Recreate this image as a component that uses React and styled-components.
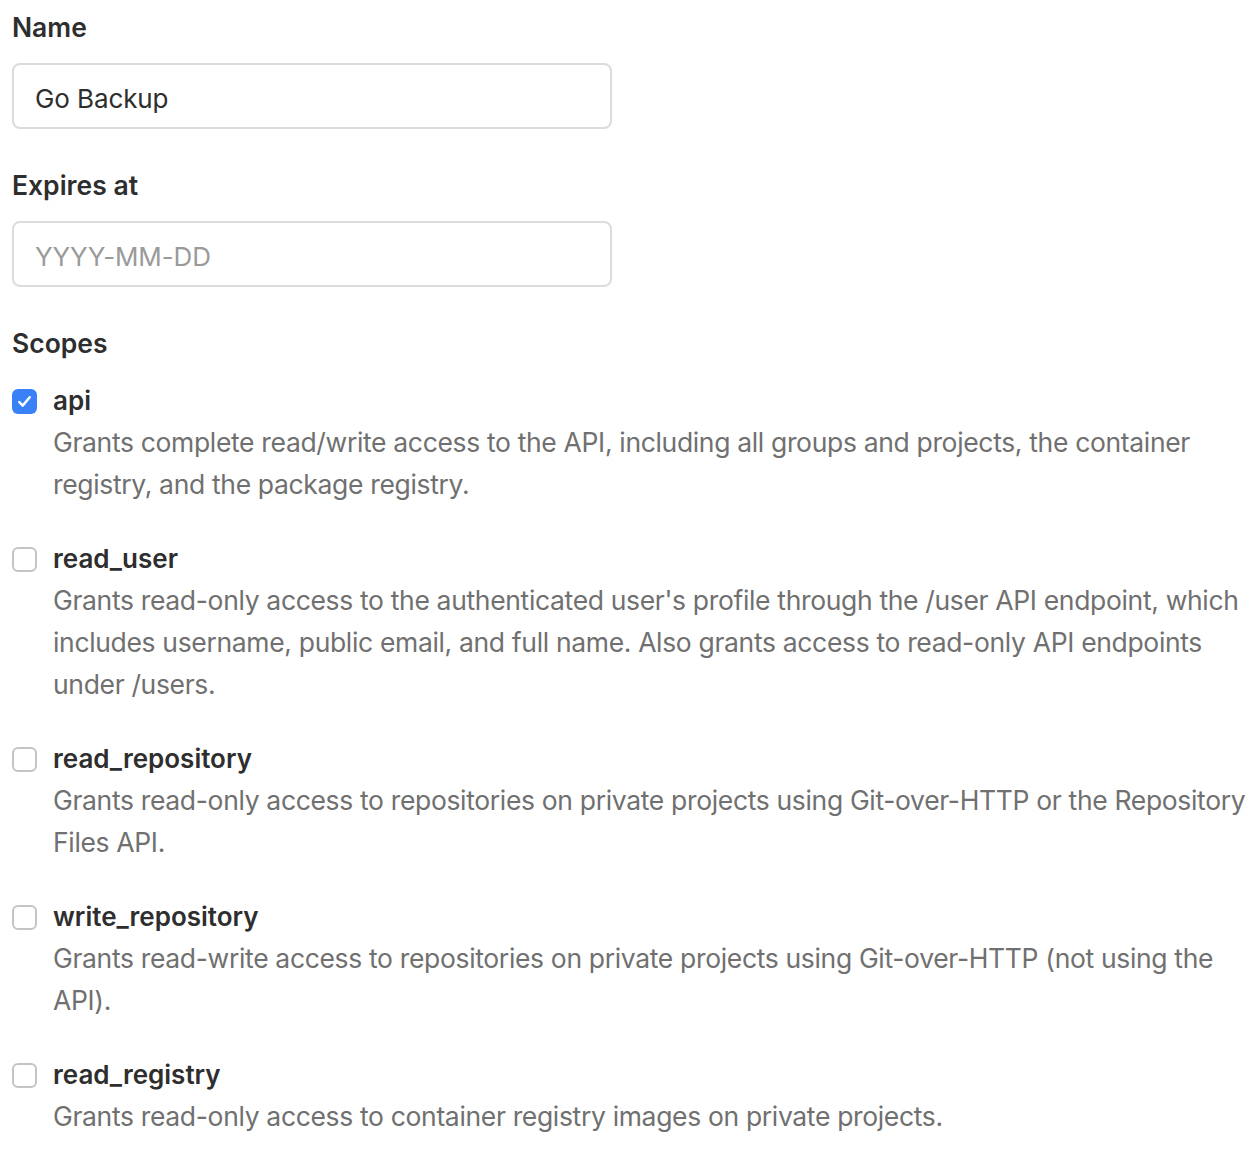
import React from "react";
import styled, { createGlobalStyle } from "styled-components";

const Global = createGlobalStyle`
  html, body { margin: 0; padding: 0; background: #fff; }
  body { font-family: Inter, "Noto Sans", "Liberation Sans", sans-serif; color: #2e2e2e; }
`;

const Page = styled.div`
  padding: 0 12px;
  display: flex;
  flex-direction: column;
`;

const FieldLabel = styled.label`
  display: block;
  font-size: 26.5px;
  font-weight: 600;
  line-height: 54px;
  color: #2e2e2e;
  margin-top: ${(p) => p.$top || 0}px;
`;

const TextInput = styled.input`
  box-sizing: border-box;
  width: 600px;
  height: 66px;
  margin-top: 9px;
  padding: 5px 21px 0;
  border: 2px solid #dcdcdc;
  border-radius: 8px;
  font-family: inherit;
  font-size: 26px;
  letter-spacing: -0.1px;
  color: #2e2e2e;
  outline: none;
  &::placeholder { color: #9a9a9a; }
`;

const ScopeList = styled.div`
  display: flex;
  flex-direction: column;
  gap: 32px;
  margin-top: 10px;
`;

const Scope = styled.div`
  display: grid;
  grid-template-columns: 41px 1fr;
`;

const Box = styled.span`
  box-sizing: border-box;
  width: 25px;
  height: 25px;
  margin-top: 9px;
  border-radius: 6px;
  border: ${(p) => (p.$checked ? "none" : "2px solid #c4c4c4")};
  background: ${(p) => (p.$checked ? "#3a80f6" : "#fff")};
  display: flex;
  align-items: center;
  justify-content: center;
`;

const ScopeName = styled.div`
  font-size: 26px;
  font-weight: 600;
  line-height: 42px;
  color: #2e2e2e;
`;

const DescBlock = styled.div`
  margin-top: -1px;
  margin-bottom: 1px;
`;

const Desc = styled.div`
  font-size: 26.5px;
  letter-spacing: -0.34px;
  line-height: 42px;
  color: #707070;
  white-space: nowrap;
`;

const scopes = [
  {
    name: "api",
    checked: true,
    lines: [
      "Grants complete read/write access to the API, including all groups and projects, the container",
      "registry, and the package registry.",
    ],
  },
  {
    name: "read_user",
    lines: [
      "Grants read-only access to the authenticated user's profile through the /user API endpoint, which",
      "includes username, public email, and full name. Also grants access to read-only API endpoints",
      "under /users.",
    ],
  },
  {
    name: "read_repository",
    lines: [
      "Grants read-only access to repositories on private projects using Git-over-HTTP or the Repository",
      "Files API.",
    ],
  },
  {
    name: "write_repository",
    lines: [
      "Grants read-write access to repositories on private projects using Git-over-HTTP (not using the",
      "API).",
    ],
  },
  {
    name: "read_registry",
    lines: ["Grants read-only access to container registry images on private projects."],
  },
];

export default function App() {
  return (
    <Page>
      <Global />
      <FieldLabel>Name</FieldLabel>
      <TextInput defaultValue="Go Backup" />
      <FieldLabel $top={29}>Expires at</FieldLabel>
      <TextInput placeholder="YYYY-MM-DD" />
      <FieldLabel $top={29}>Scopes</FieldLabel>
      <ScopeList>
        {scopes.map((s) => (
          <Scope key={s.name}>
            <Box $checked={s.checked}>
              {s.checked && (
                <svg width="19" height="19" viewBox="0 0 20 20">
                  <path d="M4.5 10.5l3.6 3.8L15.5 5.5" fill="none" stroke="#fff" strokeWidth="2.6" strokeLinecap="round" strokeLinejoin="round" />
                </svg>
              )}
            </Box>
            <div>
              <ScopeName>{s.name}</ScopeName>
              <DescBlock>
                {s.lines.map((l, i) => (
                  <Desc key={i}>{l}</Desc>
                ))}
              </DescBlock>
            </div>
          </Scope>
        ))}
      </ScopeList>
    </Page>
  );
}
